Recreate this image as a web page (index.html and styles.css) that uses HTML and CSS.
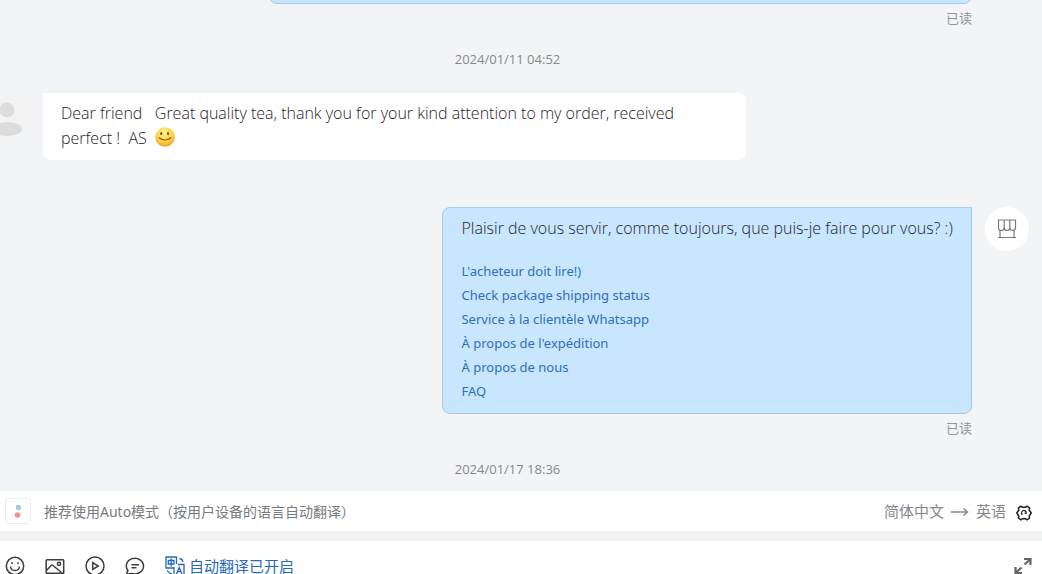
FILE: index.html
```html
<!DOCTYPE html>
<html lang="zh-CN">
<head>
<meta charset="utf-8">
<title>Chat</title>
<link rel="stylesheet" href="styles.css">
</head>
<body>
<main class="chat">
  <section class="row row-out">
    <div class="message wide">
      <div class="bubble bubble-out bubble-end"></div>
      <span class="read">已读</span>
    </div>
  </section>
  <time class="date">2024/01/11 04:52</time>
  <section class="row row-in">
    <svg class="avatar-user" viewBox="0 0 44 44" aria-hidden="true">
      <circle cx="22" cy="22" r="22" fill="#f3f3f4"/>
      <circle cx="22" cy="17" r="7.500" fill="#dcdcdd"/>
      <ellipse cx="22" cy="36" rx="15" ry="7" fill="#dcdcdd"/>
    </svg>
    <p class="message bubble bubble-in">Dear friend &nbsp; Great quality tea, thank you for your kind attention to my order, received perfect&nbsp;!&nbsp; AS&nbsp; <svg class="emoji" viewBox="0 0 20 20" role="img" aria-label="smile">
        <defs><radialGradient id="face" cx=".45" cy=".3" r=".7"><stop offset="0" stop-color="#fff08a"/><stop offset=".6" stop-color="#ffd34a"/><stop offset="1" stop-color="#efa22c"/></radialGradient></defs>
        <circle cx="10" cy="10" r="9.8" fill="url(#face)"/>
        <ellipse cx="6.200" cy="6.500" rx="1" ry="1.500" fill="#634224"/>
        <ellipse cx="13" cy="6.500" rx="1" ry="1.500" fill="#634224"/>
        <path d="M3.800 10.500Q10 15.500 16.200 10.500" fill="none" stroke="#9a5a1c" stroke-width="1.200"/>
      </svg></p>
  </section>
  <section class="row row-out row-reply">
    <div class="message">
      <div class="bubble bubble-out">
        <p class="text">Plaisir de vous servir, comme toujours, que puis-je faire pour vous? :)</p>
        <nav class="links">
          <a href="#read">L'acheteur doit lire!)</a>
          <a href="#status">Check package shipping status</a>
          <a href="#whatsapp">Service à la clientèle Whatsapp</a>
          <a href="#shipping">À propos de l'expédition</a>
          <a href="#about">À propos de nous</a>
          <a href="#faq">FAQ</a>
        </nav>
      </div>
      <span class="read">已读</span>
    </div>
    <div class="avatar-shop">
      <svg viewBox="0 0 20 20" width="20" height="20" fill="none" stroke="#77797c" stroke-width="1.2" aria-hidden="true">
        <path d="M1.500 1H18.500V8.500Q18.500 11.500 15.700 11.500T12.800 8.500Q12.800 11.500 10 11.500T7.200 8.500Q7.200 11.500 4.300 11.500T1.500 8.500ZM7.200 1V8.500M12.800 1V8.500M3 11.500V18.500M17 11.500V18.500M1 18.500H19"/>
      </svg>
    </div>
  </section>
  <time class="date date-last">2024/01/17 18:36</time>
</main>
<footer class="composer">
  <div class="translate">
    <span class="badge"><svg viewBox="0 0 24 24" width="24" height="24" aria-hidden="true"><circle cx="12.500" cy="8.500" r="2.700" fill="#9fcbe6"/><circle cx="11.500" cy="16" r="2.800" fill="#ee9295"/></svg></span>
    <span class="hint">推荐使用Auto模式（按用户设备的语言自动翻译）</span>
    <button class="language">简体中文
      <svg viewBox="0 0 18 12" width="18" height="12" fill="none" stroke="currentColor" stroke-width="1.500" aria-hidden="true"><path d="M0 7H16M12.500 3.500L16.500 7L12.500 10.500"/></svg>
      英语</button>
    <button class="icon gear" aria-label="设置"><svg viewBox="0 0 16 16" width="16" height="16" fill="none" stroke="#222" stroke-width="1.500" stroke-linejoin="round" aria-hidden="true"><path d="M5 1.200L6.500 2.300H9.500L11 1.200L13.500 2.800L13.200 5L15.200 8L13.200 11L13.500 13.200L11 14.800L9.500 13.700H6.500L5 14.800L2.500 13.200L2.800 11L.8 8L2.800 5L2.500 2.800Z"/><path d="M6.500 9.800A2.400 2.400 0 1 1 10.300 8.300L8.500 8" stroke-width="1.200"/></svg></button>
  </div>
  <div class="toolbar">
    <button class="icon" aria-label="表情"><svg viewBox="0 0 20 20" width="20" height="20" class="line"><circle cx="10" cy="10" r="8.700"/><path d="M5.500 10.500Q6 14.500 10 14.500T14.500 10.500"/><path d="M7 6.300V8M13 6.300V8"/></svg></button>
    <button class="icon" aria-label="图片"><svg viewBox="0 0 20 20" width="20" height="20" class="line"><rect x="1.200" y="3.700" width="17.500" height="13.500" rx=".8"/><path d="M1.500 14.500L6 9.500Q7 8.700 8 9.500L16.500 16.500"/><circle cx="14" cy="7.800" r="1.600"/></svg></button>
    <button class="icon" aria-label="视频"><svg viewBox="0 0 20 20" width="20" height="20" class="line"><circle cx="10" cy="10" r="9"/><path d="M7.700 6.500V13.500L13.300 10Z"/></svg></button>
    <button class="icon" aria-label="快捷回复"><svg viewBox="0 0 20 20" width="20" height="20" class="line"><path d="M2 18V16L3 14.700A8.600 7.800 0 1 1 7 17.400L2 18Z"/><path d="M6.500 8.700H14M6.500 11.700H11.500"/></svg></button>
    <button class="auto"><svg viewBox="0 0 20 20" width="20" height="20" fill="none" stroke="currentColor" stroke-width="1.300" aria-hidden="true"><path d="M9 12H1V1H11.500V8M3.300 4.500H9V8H3.300ZM6.150 2.500V10.500M14.500 2.500Q17.500 3 18 6M2.500 14Q3 17.500 7 18"/><path d="M13 8.500H19V19.500H9V11M11.500 18L14.200 11.500L17 18M12.400 15.700H16"/></svg>自动翻译已开启</button>
    <button class="icon expand" aria-label="展开"><svg viewBox="0 0 18 18" width="18" height="18" fill="none" stroke="#666" stroke-width="2.200" aria-hidden="true"><path d="M10 2H16.500V8M16 2.500L10.500 7.500M8 16H1.500V10M2 15.500L7.500 10.500"/></svg></button>
  </div>
</footer>
</body>
</html>
```
FILE: styles.css
```css
* {
  box-sizing: border-box;
}

body {
  margin: 0;
  height: 100vh;
  overflow: hidden;
  background: #f3f4f6;
  color: #3b4045;
  font-family: "Noto Sans", "Noto Sans CJK SC", sans-serif;
  font-size: 15px;
  line-height: 25px;
}

p {
  margin: 0;
}

button {
  margin: 0;
  padding: 0;
  border: 0;
  background: none;
  font: inherit;
}

.row {
  display: grid;
  grid-template-columns: 43px minmax(0, 1fr) 70px;
}

.message {
  grid-column: 2;
  max-width: 703px;
}

.row-out .message {
  display: flex;
  flex-direction: column;
  justify-self: end;
  min-width: 57%;
}

.row-out .wide {
  width: 100%;
}

.bubble {
  padding: 8px 18px 9px;
  border-radius: 8px;
}

.bubble-in,
.text {
  color: #1f242a;
  font-family: "Open Sans", sans-serif;
  font-size: 16px;
  font-weight: 300;
}

.bubble-in {
  justify-self: start;
  border-top-left-radius: 0;
  background: #fff;
}

.bubble-out {
  padding-bottom: 10px;
  border: 1px solid #a3cbe8;
  border-top-right-radius: 0;
  background: #c9e6ff;
}

.bubble-end {
  margin-top: -16px;
}

.read {
  align-self: flex-end;
  color: #92959a;
  font-size: 13px;
  line-height: 28px;
}

.date {
  display: block;
  padding: 16px 70px 22px 43px;
  color: #85898e;
  font-family: "Open Sans", sans-serif;
  font-size: 13px;
  line-height: 23px;
  text-align: center;
}

.date-last {
  padding-bottom: 10px;
}

.avatar-user {
  width: 44px;
  height: 44px;
  margin-left: -15px;
}

.emoji {
  width: 20px;
  height: 20px;
  vertical-align: -3px;
}

.row-reply {
  margin-top: 47px;
}

.avatar-shop {
  display: flex;
  align-items: center;
  justify-content: center;
  width: 44px;
  height: 44px;
  margin-left: 13px;
  border-radius: 50%;
  background: #fff;
}

.links {
  display: flex;
  flex-direction: column;
  margin-top: 18px;
  font-size: 13px;
  line-height: 24px;
}

.links a {
  color: #2e6fb7;
  text-decoration: none;
}

.translate {
  display: flex;
  align-items: center;
  height: 40px;
  padding: 0 10px 0 5px;
  background: #fff;
  color: #777b80;
}

.badge {
  display: flex;
  border: 1px solid #ececee;
  border-radius: 4px;
}

.hint {
  margin-left: 13px;
  font-size: 14px;
}

.language {
  display: flex;
  align-items: center;
  gap: 7px;
  margin-left: auto;
  margin-right: 10px;
  color: #85898e;
}

.icon {
  display: flex;
}

.gear {
  padding-top: 4px;
}

.toolbar {
  display: flex;
  align-items: center;
  height: 50px;
  margin-top: 10px;
  padding: 0 10px 0 5px;
  gap: 20px;
  background: #fff;
}

.line {
  fill: none;
  stroke: #3c3c3c;
  stroke-width: 1.5;
}

.auto {
  display: flex;
  align-items: center;
  gap: 4px;
  color: #2468c0;
}

.expand {
  margin-left: auto;
}
```
